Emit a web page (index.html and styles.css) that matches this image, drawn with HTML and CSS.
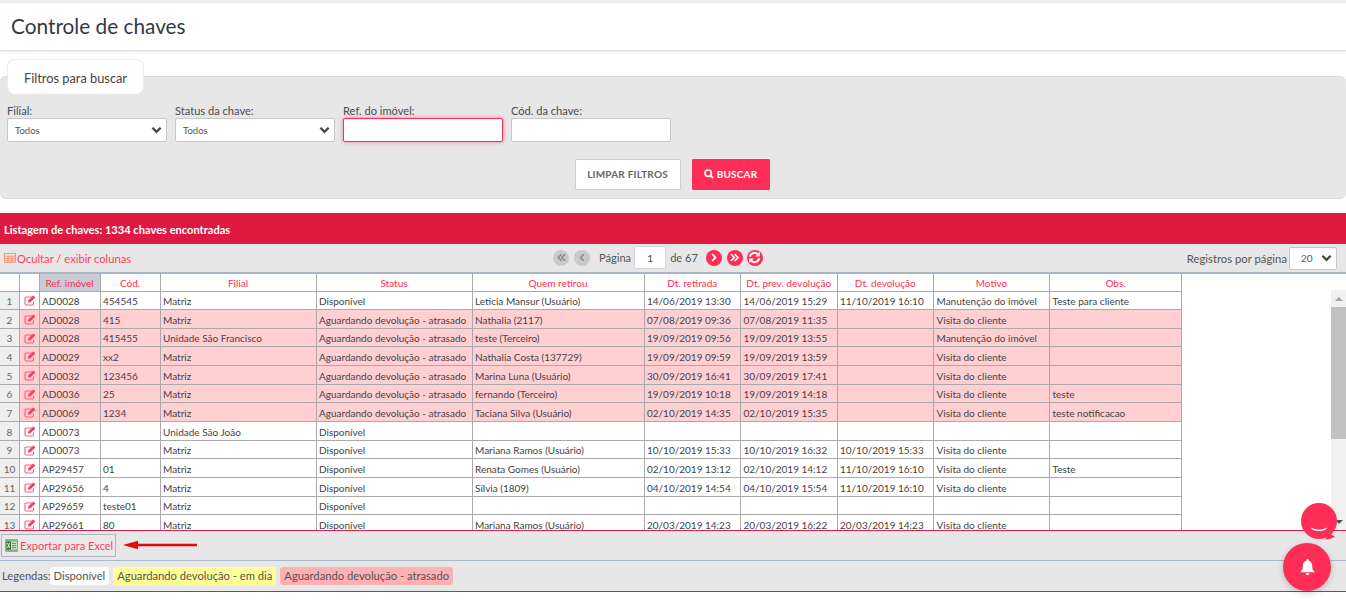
FILE: index.html
```html
<!DOCTYPE html>
<html lang="pt-BR">
<head>
<meta charset="utf-8">
<title>Controle de chaves</title>
<link rel="stylesheet" href="styles.css">
</head>
<body>
<svg class="defs" width="0" height="0"><symbol id="edit" viewBox="0 0 12 11"><path d="M8.500 2H2.200q-1.200 0-1.200 1.200v5.600q0 1.200 1.200 1.200h6.100q1.200 0 1.200-1.200V6.500" fill="none" stroke="#ff5a78" stroke-width="1.100"/><path d="M4 7.800 4.400 5.300 9.400.6l2 2L6.500 7.300z" fill="#ff3c5f"/></symbol></svg>
<header class="page-head"><h1>Controle de chaves</h1></header>
<section class="filters">
  <div class="tab">Filtros para buscar</div>
  <div class="panel">
    <div class="fields">
      <div class="field"><label>Filial:</label><div class="select">Todos<svg class="chev" viewBox="0 0 12 8"><path d="M1.500 1.500 6 6l4.500-4.500" fill="none" stroke="#444" stroke-width="2.400"/></svg></div></div>
      <div class="field"><label>Status da chave:</label><div class="select">Todos<svg class="chev" viewBox="0 0 12 8"><path d="M1.500 1.500 6 6l4.500-4.500" fill="none" stroke="#444" stroke-width="2.400"/></svg></div></div>
      <div class="field"><label>Ref. do imóvel:</label><div class="input focus"></div></div>
      <div class="field"><label>Cód. da chave:</label><div class="input"></div></div>
    </div>
    <div class="actions">
      <button class="btn btn-light">LIMPAR FILTROS</button>
      <button class="btn btn-red"><svg class="ic-search" viewBox="0 0 12 12"><circle cx="5" cy="5" r="3.800" fill="none" stroke="#fff" stroke-width="2"/><path d="M7.600 7.600 11 11" stroke="#fff" stroke-width="2.400"/></svg>BUSCAR</button>
    </div>
  </div>
</section>
<div class="list-title">Listagem de chaves: 1334 chaves encontradas</div>
<div class="toolbar">
  <div class="columns-link"><svg class="ic-table" viewBox="0 0 12 10"><path d="M.5.5h11v9H.5zM.5 3.200h11M.5 5.400h11M.5 7.600h11M4 3.200v6.300M8 3.200v6.300" fill="none" stroke="#f58a5f" stroke-width=".8"/></svg>Ocultar / exibir colunas</div>
  <div class="pager">
    <span class="pg off"><svg viewBox="0 0 10 10"><path d="M5 2 2 5l3 3M8.200 2l-3 3 3 3" fill="none" stroke="#888" stroke-width="1.400"/></svg></span>
    <span class="pg off"><svg viewBox="0 0 10 10"><path d="M6.200 2l-3 3 3 3" fill="none" stroke="#888" stroke-width="1.400"/></svg></span>
    <span class="pg-text first">Página</span>
    <span class="pg-input">1</span>
    <span class="pg-text">de 67</span>
    <span class="pg on"><svg viewBox="0 0 10 10"><path d="M3.800 2l3 3-3 3" fill="none" stroke="#fff" stroke-width="1.600"/></svg></span>
    <span class="pg on"><svg viewBox="0 0 10 10"><path d="M1.800 2l3 3-3 3M5.200 2l3 3-3 3" fill="none" stroke="#fff" stroke-width="1.500"/></svg></span>
    <span class="pg on refresh"><svg viewBox="0 0 12 12"><path d="M1.700 5.200a4.400 4.400 0 0 1 7.700-1.900M10.300 6.800a4.400 4.400 0 0 1-7.700 1.900" fill="none" stroke="#fff" stroke-width="2"/><path d="M11 .8v4.300H6.700zM1 11.200V6.900h4.300z" fill="#fff"/></svg></span>
  </div>
  <div class="per-page"><span>Registros por página</span><div class="select small">20<svg class="chev" viewBox="0 0 12 8"><path d="M1.500 1.500 6 6l4.500-4.500" fill="none" stroke="#444" stroke-width="2.400"/></svg></div></div>
</div>
<div class="grid-wrap">
  <div class="grid-main">
  <table class="grid">
    <colgroup>
      <col class="c-n"><col class="c-i"><col class="c-ref"><col class="c-cod"><col class="c-fil"><col class="c-sta"><col class="c-quem"><col class="c-dt"><col class="c-dt"><col class="c-dt"><col class="c-mot"><col class="c-obs">
    </colgroup>
    <thead><tr><th class="blank"></th><th class="blank"></th><th class="sorted">Ref. imóvel</th><th>Cód.</th><th>Filial</th><th>Status</th><th>Quem retirou</th><th>Dt. retirada</th><th>Dt. prev. devolução</th><th>Dt. devolução</th><th>Motivo</th><th>Obs.</th></tr></thead>
    <tbody>
      <tr><td class="n">1</td><td class="e"><svg class="ic-edit"><use href="#edit"/></svg></td><td>AD0028</td><td>454545</td><td>Matriz</td><td>Disponível</td><td>Leticia Mansur (Usuário)</td><td>14/06/2019 13:30</td><td>14/06/2019 15:29</td><td>11/10/2019 16:10</td><td>Manutenção do imóvel</td><td>Teste para cliente</td></tr>
      <tr class="late"><td class="n">2</td><td class="e"><svg class="ic-edit"><use href="#edit"/></svg></td><td>AD0028</td><td>415</td><td>Matriz</td><td>Aguardando devolução - atrasado</td><td>Nathalia (2117)</td><td>07/08/2019 09:36</td><td>07/08/2019 11:35</td><td></td><td>Visita do cliente</td><td></td></tr>
      <tr class="late"><td class="n">3</td><td class="e"><svg class="ic-edit"><use href="#edit"/></svg></td><td>AD0028</td><td>415455</td><td>Unidade São Francisco</td><td>Aguardando devolução - atrasado</td><td>teste (Terceiro)</td><td>19/09/2019 09:56</td><td>19/09/2019 13:55</td><td></td><td>Manutenção do imóvel</td><td></td></tr>
      <tr class="late"><td class="n">4</td><td class="e"><svg class="ic-edit"><use href="#edit"/></svg></td><td>AD0029</td><td>xx2</td><td>Matriz</td><td>Aguardando devolução - atrasado</td><td>Nathalia Costa (137729)</td><td>19/09/2019 09:59</td><td>19/09/2019 13:59</td><td></td><td>Visita do cliente</td><td></td></tr>
      <tr class="late"><td class="n">5</td><td class="e"><svg class="ic-edit"><use href="#edit"/></svg></td><td>AD0032</td><td>123456</td><td>Matriz</td><td>Aguardando devolução - atrasado</td><td>Marina Luna (Usuário)</td><td>30/09/2019 16:41</td><td>30/09/2019 17:41</td><td></td><td>Visita do cliente</td><td></td></tr>
      <tr class="late"><td class="n">6</td><td class="e"><svg class="ic-edit"><use href="#edit"/></svg></td><td>AD0036</td><td>25</td><td>Matriz</td><td>Aguardando devolução - atrasado</td><td>fernando (Terceiro)</td><td>19/09/2019 10:18</td><td>19/09/2019 14:18</td><td></td><td>Visita do cliente</td><td>teste</td></tr>
      <tr class="late"><td class="n">7</td><td class="e"><svg class="ic-edit"><use href="#edit"/></svg></td><td>AD0069</td><td>1234</td><td>Matriz</td><td>Aguardando devolução - atrasado</td><td>Taciana Silva (Usuário)</td><td>02/10/2019 14:35</td><td>02/10/2019 15:35</td><td></td><td>Visita do cliente</td><td>teste notificacao</td></tr>
      <tr><td class="n">8</td><td class="e"><svg class="ic-edit"><use href="#edit"/></svg></td><td>AD0073</td><td></td><td>Unidade São João</td><td>Disponível</td><td></td><td></td><td></td><td></td><td></td><td></td></tr>
      <tr><td class="n">9</td><td class="e"><svg class="ic-edit"><use href="#edit"/></svg></td><td>AD0073</td><td></td><td>Matriz</td><td>Disponível</td><td>Mariana Ramos (Usuário)</td><td>10/10/2019 15:33</td><td>10/10/2019 16:32</td><td>10/10/2019 15:33</td><td>Visita do cliente</td><td></td></tr>
      <tr><td class="n">10</td><td class="e"><svg class="ic-edit"><use href="#edit"/></svg></td><td>AP29457</td><td>01</td><td>Matriz</td><td>Disponível</td><td>Renata Gomes (Usuário)</td><td>02/10/2019 13:12</td><td>02/10/2019 14:12</td><td>11/10/2019 16:10</td><td>Visita do cliente</td><td>Teste</td></tr>
      <tr><td class="n">11</td><td class="e"><svg class="ic-edit"><use href="#edit"/></svg></td><td>AP29656</td><td>4</td><td>Matriz</td><td>Disponível</td><td>Silvia (1809)</td><td>04/10/2019 14:54</td><td>04/10/2019 15:54</td><td>11/10/2019 16:10</td><td>Visita do cliente</td><td></td></tr>
      <tr><td class="n">12</td><td class="e"><svg class="ic-edit"><use href="#edit"/></svg></td><td>AP29659</td><td>teste01</td><td>Matriz</td><td>Disponível</td><td></td><td></td><td></td><td></td><td></td><td></td></tr>
      <tr><td class="n">13</td><td class="e"><svg class="ic-edit"><use href="#edit"/></svg></td><td>AP29661</td><td>80</td><td>Matriz</td><td>Disponível</td><td>Mariana Ramos (Usuário)</td><td>20/03/2019 14:23</td><td>20/03/2019 16:22</td><td>20/03/2019 14:23</td><td>Visita do cliente</td><td></td></tr>
    </tbody>
  </table>
  </div>
  <div class="scroll">
    <div class="scroll-btn"><span class="arrow up"></span></div>
    <div class="thumb"></div>
    <div class="track"></div>
    <div class="scroll-btn down"><span class="arrow dn"></span></div>
  </div>
</div>
<div class="export-bar">
  <div class="export"><svg class="ic-xls" viewBox="0 0 13 13"><rect width="13" height="13" rx="1" fill="#8fb085"/><rect x="5" y="2.500" width="7" height="8" fill="#c9dcc0"/><path d="M1.500 2.500h4.500v8H1.500z" fill="#2f7a3a"/><path d="M2.500 4l2.200 5M4.700 4 2.500 9" stroke="#fff" stroke-width=".9"/><path d="M7 4.500h4M7 6.500h4M7 8.500h4" stroke="#6d9a62"/></svg><span class="export-text">Exportar para Excel</span></div>
  <svg class="arrow-red" viewBox="0 0 74 10"><path d="M0 5 15 .8v2.900h59v2.600H15v2.900z" fill="#e00b0b"/></svg>
</div>
<div class="legend">
  <span class="legend-label">Legendas:</span>
  <span class="tag tag-white">Disponível</span>
  <span class="tag tag-yellow">Aguardando devolução - em dia</span>
  <span class="tag tag-pink">Aguardando devolução - atrasado</span>
</div>
<div class="chat"><svg viewBox="0 0 38 38"><circle cx="18" cy="18" r="18" fill="#ff2e57"/><path d="M28 30l6 3.500c-3 2-6 3-10 3z" fill="#ff2e57"/><path d="M10 24.500c3 1.500 5 2 8 2s5-.5 8-2c-.5 2-3 3.500-8 3.500s-7.500-1.500-8-3.500z" fill="#fff"/></svg></div>
<div class="bell"><svg viewBox="0 0 16 18"><path d="M8 0a1.300 1.300 0 0 1 1.200 1.800C12 2.500 13 5 13 8c0 3 1 4.500 3 6H0c2-1.500 3-3 3-6 0-3 1-5.500 3.800-6.200A1.300 1.300 0 0 1 8 0zM6 15h4a2 2 0 0 1-4 0z" fill="#fff"/></svg></div>
</body>
</html>
```

FILE: styles.css
```css
* { box-sizing: border-box; }
html, body { margin: 0; padding: 0; }
body {
  width: 1346px;
  height: 604px;
  overflow: hidden;
  background: #fff;
  font-family: Lato, "Open Sans", sans-serif;
  color: #444;
  position: relative;
}
.defs { position: absolute; }
.page-head {
  height: 51px;
  border-top: 3px solid #ececec;
  border-bottom: 1px solid #e2e2e2;
  box-shadow: 0 1px 3px rgba(0,0,0,.1);
  padding: 11px 11px 0;
}
.page-head h1 {
  margin: 0;
  font-size: 20.800px;
  line-height: 24px;
  font-weight: 400;
  color: #333a45;
}
.filters { padding-top: 8px; }
.tab {
  position: relative;
  z-index: 1;
  width: 137px;
  height: 35px;
  margin-left: 7px;
  background: #fff;
  border: 1px solid #ececec;
  border-bottom: 0;
  border-radius: 8px;
  text-align: center;
  font-size: 12.800px;
  line-height: 36px;
  color: #444;
}
.panel {
  height: 123px;
  margin-top: -18px;
  background: #e7e7e7;
  border: 1px solid #dcdcdc;
  border-width: 1px 0;
  border-radius: 6px;
  padding: 27px 7px 0;
}
.fields { display: flex; gap: 8px; }
.field { width: 160px; }
.field label {
  display: block;
  height: 14px;
  font-size: 11.100px;
  line-height: 14px;
  color: #4a4a55;
}
.select, .input {
  height: 24px;
  background: #fff;
  border: 1px solid #c8c8c8;
  border-radius: 2px;
}
.select {
  display: flex;
  align-items: center;
  justify-content: space-between;
  padding: 0 4px 0 7px;
  font-size: 9.500px;
  color: #555;
}
.input.focus {
  border-color: #ff2e57;
  box-shadow: 0 0 4px rgba(255,46,87,.55);
}
.chev { width: 11px; height: 8px; }
.actions {
  display: flex;
  justify-content: center;
  gap: 11px;
  margin-top: 17px;
  padding-right: 2px;
}
.btn {
  height: 31px;
  font-family: inherit;
  font-size: 10px;
  font-weight: 700;
  letter-spacing: .2px;
  border-radius: 1px;
  padding: 0 0 2px;
}
.btn-light {
  width: 106px;
  background: #fff;
  border: 1px solid #cfcfcf;
  color: #666;
}
.btn-red {
  width: 78px;
  background: #ff2e57;
  border: 1px solid #ff2e57;
  color: #fff;
  display: flex;
  align-items: center;
  justify-content: center;
  gap: 3px;
}
.ic-search { width: 10px; height: 10px; }
.list-title {
  height: 31px;
  margin-top: 14px;
  background: #de1a40;
  color: #fff;
  font-size: 11.100px;
  font-weight: 700;
  line-height: 34px;
  padding-left: 4px;
}
.toolbar {
  position: relative;
  height: 30px;
  background: #e7e7e7;
  border-bottom: 2px solid #aab5c4;
  display: flex;
  align-items: center;
  justify-content: space-between;
  padding: 0 9px 0 4px;
}
.columns-link {
  display: flex;
  align-items: center;
  gap: 1px;
  font-size: 11.200px;
  color: #ff3c5f;
}
.ic-table { width: 12px; height: 10px; }
.pager {
  position: absolute;
  left: 553px;
  top: 0;
  height: 27px;
  display: flex;
  align-items: center;
}
.pg {
  width: 16px;
  height: 16px;
  border-radius: 50%;
  display: flex;
  align-items: center;
  justify-content: center;
  margin-right: 5px;
}
.pg svg { width: 11px; height: 11px; }
.pg.off { background: #c9c9c9; }
.pg.on { background: #ff2e57; }
.pg.refresh { margin-left: -1px; }
.pg.refresh svg { width: 13px; height: 13px; }
.pg-text { font-size: 11.100px; color: #555; margin-right: 4px; margin-left: -1px; }
.pg-text.first { margin-left: 4px; margin-right: 3px; }
.pg-text + .pg { margin-left: 4px; }
.pg-input {
  width: 32px;
  height: 23px;
  background: #fff;
  border: 1px solid #d5d5d5;
  border-radius: 2px;
  text-align: center;
  font-size: 10px;
  line-height: 23px;
  margin-right: 5px;
}
.per-page {
  display: flex;
  align-items: center;
  gap: 2px;
  font-size: 11.300px;
  color: #555;
}
.per-page .select { height: 23px; }
.select.small { width: 48px; font-size: 10px; padding: 0 4px 0 11px; }
.grid-wrap {
  display: flex;
  height: 256px;
  overflow: hidden;
}
.grid-main { flex: 1; overflow: hidden; }
.grid {
  border-collapse: collapse;
  table-layout: fixed;
  width: 1182px;
  margin: -1px 0 0 -1px;
  font-size: 10px;
}
.c-n { width: 19.500px; }
.c-i { width: 20px; }
.c-ref { width: 61px; }
.c-cod { width: 60px; }
.c-fil { width: 156px; }
.c-sta { width: 156px; }
.c-quem { width: 172px; }
.c-dt { width: 96.500px; }
.c-mot { width: 116px; }
.c-obs { width: 132px; }
.grid th, .grid td {
  border: 1px solid #aaa;
  padding: 1.500px 2px 0 2.500px;
  white-space: nowrap;
  overflow: hidden;
  font-weight: 400;
}
.grid th {
  height: 18px;
  border-top: 0;
  padding: 2px 2px 0;
  color: #ff2e4f;
  text-align: center;
  font-size: 10px;
}
.grid th.sorted { background: #c8ccd4; }
.grid td { height: 18.670px; color: #444; }
.grid tr.late td { background: #ffcfd2; }
.grid td.n {
  background: #efefef;
  text-align: center;
  color: #666;
}
.grid tr.late td.n { background: #efefef; }
.grid td.e { padding: 1px 0 0 4px; line-height: 0; }
.ic-edit { width: 12px; height: 11px; display: block; }
.scroll {
  width: 15px;
  margin: 16px 0 0 0;
  background: #f1f1f1;
  display: flex;
  flex-direction: column;
}
.scroll-btn { height: 17px; display: flex; align-items: center; justify-content: center; flex: none; }
.thumb { height: 132px; flex: none; background: #c1c1c1; }
.track { flex: 1; }
.arrow { width: 0; height: 0; border-left: 4px solid transparent; border-right: 4px solid transparent; }
.arrow.up { border-bottom: 4px solid #a3a3a3; }
.arrow.dn { border-top: 4px solid #505050; }
.export-bar {
  height: 31px;
  background: #e7e7e7;
  border-top: 1px solid #d81f45;
  border-bottom: 1px solid #aab9cd;
  display: flex;
  align-items: center;
  padding-left: 1px;
  position: relative;
}
.export {
  width: 115px;
  height: 23px;
  border: 1px solid #aab5c4;
  background: #e9e9e9;
  display: flex;
  align-items: center;
  gap: 2px;
  padding-left: 3px;
  font-size: 11px;
  color: #ff3c5f;
}
.export-text { white-space: nowrap; }
.ic-xls { width: 13px; height: 13px; flex: none; }
.arrow-red { width: 74px; height: 10px; margin: 0 0 2px 7px; }
.legend {
  height: 31px;
  background: #e7e7e7;
  border-bottom: 1px solid #d81f45;
  display: flex;
  align-items: center;
  padding-left: 2px;
  font-size: 11.200px;
  color: #555;
}
.legend-label { margin-right: -1px; position: relative; top: -1px; }
.tag { height: 18px; line-height: 18px; padding: 0 4px; border-radius: 3px; margin-right: 4px; }
.tag-white { background: #fff; }
.tag-yellow { background: #ffff99; }
.tag-pink { background: #ffb0b3; }
.chat {
  position: absolute;
  left: 1301px;
  top: 503px;
  width: 38px;
  height: 38px;
}
.chat svg { width: 38px; height: 38px; display: block; }
.bell {
  position: absolute;
  left: 1283px;
  top: 543px;
  width: 48px;
  height: 48px;
  border-radius: 50%;
  background: #ff2e57;
  box-shadow: 0 2px 6px rgba(0,0,0,.2);
  display: flex;
  align-items: center;
  justify-content: center;
}
.bell svg { width: 15px; height: 17px; }
```
